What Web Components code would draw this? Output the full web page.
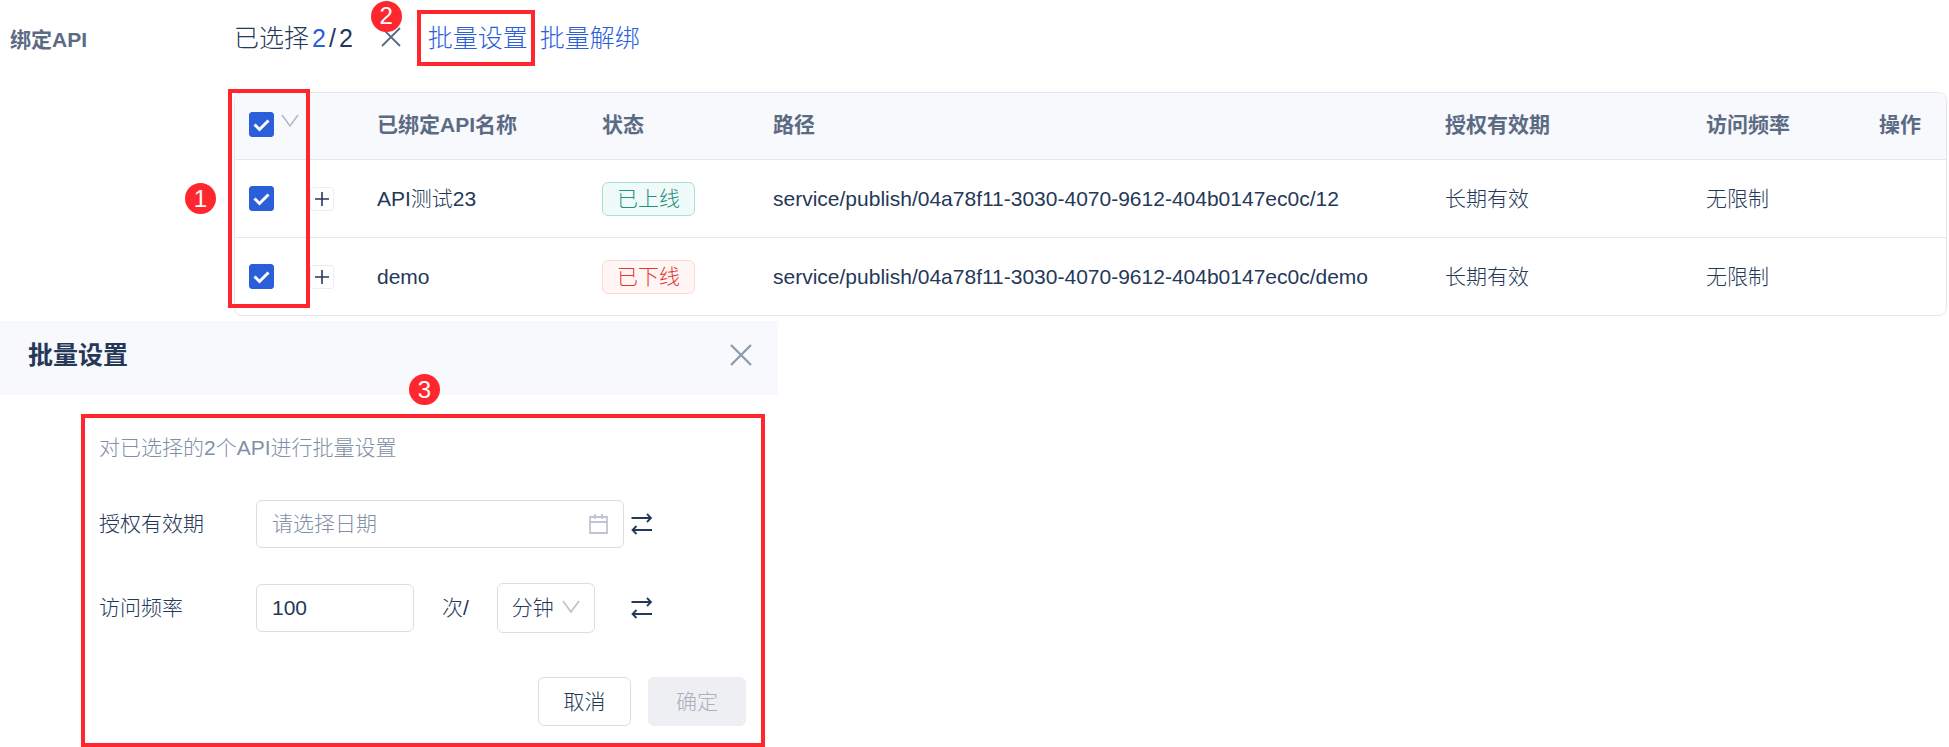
<!DOCTYPE html>
<html lang="zh-CN">
<head>
<meta charset="utf-8">
<title>绑定API</title>
<style>
  :root {
    --text: #253858;
    --text-sub: #5c6b84;
    --text-hint: #8290a6;
    --primary: #2b5fda;
    --line: #e4e7ed;
    --field: #d9dde8;
    --head: #f7f9fd;
    --mark: #ff272d;
  }
  body {
    margin: 0;
    background: #fff;
    color: var(--text);
    font: 300 21px/32px "Liberation Sans", "Noto Sans CJK SC", sans-serif;
  }
</style>
</head>
<body>
<bind-section></bind-section>
<batch-panel></batch-panel>

<script>
  function define(name, html, setup) {
    const template = document.createElement("template");
    template.innerHTML = html;
    customElements.define(name, class extends HTMLElement {
      constructor() {
        super();
        const root = this.attachShadow({ mode: "open" });
        root.appendChild(template.content.cloneNode(true));
        if (setup) setup.call(this, root);
      }
    });
  }

  // round number badge of a guide step
  define("step-badge", `
    <style>
      :host {
        display: flex;
        align-items: center;
        justify-content: center;
        width: 31px;
        height: 31px;
        border-radius: 50%;
        background: var(--mark);
        color: #fff;
        font-size: 24px;
        line-height: 32px;
      }
    </style>
    <slot></slot>`);

  // state label, type="online" or type="offline"
  define("status-tag", `
    <style>
      :host {
        display: inline-block;
        box-sizing: border-box;
        height: 34px;
        padding: 0 14px;
        border: 1px solid #a9e0d7;
        border-radius: 6px;
        background: #f0faf8;
        color: #1f9180;
        line-height: 32px;
        vertical-align: middle;
      }
      :host([type="offline"]) {
        border-color: #ffd8d5;
        background: #fff5f4;
        color: #e2382f;
      }
    </style>
    <slot></slot>`);

  define("check-box", `
    <style>
      :host { display: block; position: relative; width: 25px; height: 25px; }
      input {
        appearance: none;
        display: block;
        width: 25px;
        height: 25px;
        margin: 0;
        border: 1px solid var(--field);
        border-radius: 3px;
      }
      input:checked { border-color: var(--primary); background: var(--primary); }
      svg { position: absolute; inset: 0; pointer-events: none; }
    </style>
    <input type="checkbox" checked>
    <svg width="25" height="25" fill="none" stroke="#fff" stroke-width="3"><path d="M5.500 12.500l5 5L19.500 8.500"/></svg>`,
    function (root) {
      root.querySelector("input").setAttribute("aria-label", this.getAttribute("label") || "选择");
    });

  define("swap-button", `
    <style>
      :host { display: block; }
      button { display: block; padding: 0; border: 0; background: none; color: var(--text); }
      svg { display: block; }
    </style>
    <button type="button" aria-label="切换">
      <svg width="22" height="22" fill="none" stroke="currentColor" stroke-width="1.8">
        <path d="M.5 5H20M16 1l4 4-4 4M21 17H1.500M5.500 13l-4 4 4 4"/>
      </svg>
    </button>`);

  define("select-toolbar", `
    <style>
      :host { display: flex; align-items: center; height: 57px; font-size: 25px; }
      .count { display: flex; gap: 3px; }
      b { font-weight: inherit; color: var(--primary); }
      button { margin: 0 16px 0 28px; padding: 0; border: 0; background: none; color: var(--text-sub); }
      svg { display: block; }
      a { color: var(--primary); text-decoration: none; }
      .clear { position: relative; }
      .clear svg { margin-top: 3px; }
      .clear step-badge { position: absolute; left: 18px; bottom: 22px; }
      .marked { padding: 8px 3px 8px 7px; border: 4px solid var(--mark); margin-right: 5px; }
    </style>
    <span class="count"><span>已选择</span><b>2</b><span>/</span><span>2</span></span>
    <span class="clear">
      <button type="button" aria-label="清空">
        <svg width="20" height="20" fill="none" stroke="currentColor" stroke-width="1.800"><path d="M1 1l18 18M19 1L1 19"/></svg>
      </button>
      <step-badge>2</step-badge>
    </span>
    <a class="marked" href="#set">批量设置</a>
    <a href="#unbind">批量解绑</a>`);

  define("api-table", `
    <style>
      :host {
        display: block;
        position: relative;
        border: 1px solid var(--line);
        border-radius: 8px;
      }
      table { width: 100%; table-layout: fixed; border-spacing: 0; }
      th, td { padding: 0; text-align: left; white-space: nowrap; border-bottom: 1px solid var(--line); }
      th { height: 63px; padding-bottom: 3px; background: var(--head); color: var(--text-sub); }
      td { height: 77px; }
      tr:last-child td { border-bottom: 0; }
      thead tr:last-child th:first-child { border-top-left-radius: 8px; }
      thead th:last-child { border-top-right-radius: 8px; }
      .pick { width: 75px; }
      .open { width: 67px; }
      .name { width: 225px; }
      .state { width: 171px; }
      .valid { width: 261px; }
      .rate { width: 173px; }
      .action { width: 67px; }
      .all { display: flex; gap: 7px; }
      check-box { margin-left: 14px; }
      .all check-box { flex: none; }
      .plus {
        display: block;
        width: 24px;
        height: 24px;
        padding: 0;
        border: 1px solid #ebedf2;
        border-radius: 3px;
        background: #fff;
        color: var(--text);
      }
      svg { display: block; }
      .mark {
        position: absolute;
        left: -7px;
        top: -4px;
        bottom: 7px;
        width: 74px;
        border: 4px solid var(--mark);
        pointer-events: none;
      }
      step-badge { position: absolute; left: -50px; top: 90px; }
    </style>
    <table>
      <thead>
        <tr>
          <th class="pick">
            <div class="all">
              <check-box label="全选"></check-box>
              <svg width="18" height="18" fill="none" stroke="#b3bac6" stroke-width="1.600"><path d="M1 3l8 11 8-11"/></svg>
            </div>
          </th>
          <th class="open"></th>
          <th class="name">已绑定API名称</th>
          <th class="state">状态</th>
          <th>路径</th>
          <th class="valid">授权有效期</th>
          <th class="rate">访问频率</th>
          <th class="action">操作</th>
        </tr>
      </thead>
      <tbody></tbody>
    </table>
    <div class="mark"></div>
    <step-badge>1</step-badge>`,
    function (root) {
      const rows = [
        ["API测试23", "online", "已上线", "service/publish/04a78f11-3030-4070-9612-404b0147ec0c/12"],
        ["demo", "offline", "已下线", "service/publish/04a78f11-3030-4070-9612-404b0147ec0c/demo"],
      ];
      root.querySelector("tbody").innerHTML = rows.map(([name, type, state, path]) => `
        <tr>
          <td><check-box label="${name}"></check-box></td>
          <td><button class="plus" type="button" aria-label="展开">
            <svg width="22" height="22" fill="none" stroke="currentColor" stroke-width="1.600"><path d="M4 11h14M11 4v14"/></svg>
          </button></td>
          <td>${name}</td>
          <td><status-tag type="${type}">${state}</status-tag></td>
          <td>${path}</td>
          <td>长期有效</td>
          <td>无限制</td>
          <td></td>
        </tr>`).join("");
    });

  define("bind-section", `
    <style>
      :host {
        display: grid;
        grid-template-columns: 224px minmax(0, 1fr);
        padding: 9px 2px 5px 10px;
      }
      .label { color: var(--text-sub); font-weight: bold; line-height: 61px; }
      api-table { margin-top: 26px; }
    </style>
    <div class="label">绑定API</div>
    <div>
      <select-toolbar></select-toolbar>
      <api-table></api-table>
    </div>`);

  define("batch-form", `
    <style>
      :host { display: block; }
      form {
        box-sizing: border-box;
        padding: 14px 15px 17px 14px;
        border: 4px solid var(--mark);
      }
      p { margin: 0; color: var(--text-hint); }
      .row { display: flex; align-items: center; height: 50px; }
      .date { margin-top: 35px; }
      .rate { margin-top: 34px; }
      .row > label:first-child { width: 157px; }
      input, select, .btn {
        box-sizing: border-box;
        margin: 0;
        border: 1px solid var(--field);
        border-radius: 6px;
        background: #fff;
        color: var(--text);
        font: inherit;
      }
      input { height: 48px; padding: 0 15px; }
      input::placeholder { color: var(--text-hint); opacity: 1; }
      .picker, .unit { position: relative; }
      .picker { width: 368px; margin-right: 7px; }
      .picker input { width: 100%; }
      .picker svg { position: absolute; right: 16px; top: 14px; }
      #rate { width: 158px; }
      .per { margin: 0 28px; }
      .unit { margin-right: 36px; }
      select { display: block; appearance: none; width: 98px; height: 50px; padding: 0 14px; }
      .unit svg { position: absolute; right: 15px; top: 17px; pointer-events: none; }
      .foot { display: flex; justify-content: flex-end; gap: 17px; margin-top: 44px; }
      .btn { width: 93px; height: 49px; padding: 0; }
      .btn:disabled { width: 98px; border-color: #edeff3; background: #edeff3; color: #a9b1bf; }
    </style>
    <form>
      <p>对已选择的2个API进行批量设置</p>
      <div class="row date">
        <label for="date">授权有效期</label>
        <div class="picker">
          <input id="date" type="text" placeholder="请选择日期">
          <svg width="19" height="20" fill="none" stroke="#bfc5d0" stroke-width="1.800"><path d="M1 3h17v16H1zM1 8h17M6 0v5M13 0v5"/></svg>
        </div>
        <swap-button></swap-button>
      </div>
      <div class="row rate">
        <label for="rate">访问频率</label>
        <input id="rate" type="text" value="100">
        <label class="per" for="unit">次/</label>
        <div class="unit">
          <select id="unit"><option>分钟</option></select>
          <svg width="18" height="15" fill="none" stroke="#bfc5d0" stroke-width="1.800"><path d="M1 1l8 11 8-11"/></svg>
        </div>
        <swap-button></swap-button>
      </div>
      <div class="foot">
        <button class="btn" type="button">取消</button>
        <button class="btn" type="submit" disabled>确定</button>
      </div>
    </form>`);

  define("batch-panel", `
    <style>
      :host { display: block; position: relative; width: 778px; max-width: 100%; }
      header {
        display: flex;
        align-items: center;
        justify-content: space-between;
        height: 74px;
        padding: 0 26px 0 28px;
        background: var(--head);
      }
      h2 { margin: 0; padding-bottom: 6px; font-size: 25px; line-height: 32px; }
      button { padding: 0 0 6px; border: 0; background: none; color: #8b99ae; }
      svg { display: block; }
      batch-form { margin: 19px 13px 0 81px; }
      step-badge { position: absolute; left: 409px; top: 53px; }
    </style>
    <header>
      <h2>批量设置</h2>
      <button type="button" aria-label="关闭">
        <svg width="22" height="22" fill="none" stroke="currentColor" stroke-width="2.200"><path d="M1 1l20 20M21 1L1 21"/></svg>
      </button>
    </header>
    <step-badge>3</step-badge>
    <batch-form></batch-form>`);
</script>
</body>
</html>
